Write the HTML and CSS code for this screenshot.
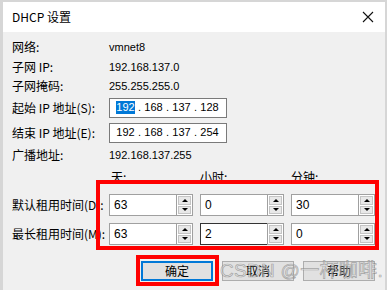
FILE: index.html
```html
<!DOCTYPE html>
<html lang="zh-CN">
  <head>
    <meta charset="UTF-8" />
    <title>DHCP 设置</title>
    <link rel="stylesheet" href="styles.css">
  </head>
  <body>
    <div class="screen">
      <div class="dialog">
        <div class="titlebar">
          <span>DHCP 设置</span>
          <svg class="close" width="12" height="12" viewBox="0 0 12 12" aria-hidden="true">
            <path d="M1 1 L11 11 M11 1 L1 11" stroke="#111" stroke-width="1.1" fill="none" />
          </svg>
        </div>

        <div class="body">
          <div class="row r1"><span class="label">网络:</span><span class="value">vmnet8</span></div>
          <div class="row r2"><span class="label">子网 IP:</span><span class="value">192.168.137.0</span></div>
          <div class="row r3"><span class="label">子网掩码:</span><span class="value">255.255.255.0</span></div>

          <div class="row ip">
            <span class="label">起始 IP 地址(S):</span>
            <div class="ipbox">
              <span class="oct sel">192</span><span class="dot">.</span>
              <span class="oct">168</span><span class="dot">.</span>
              <span class="oct">137</span><span class="dot">.</span>
              <span class="oct">128</span>
            </div>
          </div>
          <div class="row ip">
            <span class="label">结束 IP 地址(E):</span>
            <div class="ipbox">
              <span class="oct">192</span><span class="dot">.</span>
              <span class="oct">168</span><span class="dot">.</span>
              <span class="oct">137</span><span class="dot">.</span>
              <span class="oct">254</span>
            </div>
          </div>
          <div class="row r6"><span class="label">广播地址:</span><span class="value">192.168.137.255</span></div>

          <div class="units">
            <span>天:</span><span>小时:</span><span>分钟:</span>
          </div>

          <div class="row spinrow">
            <span class="label">默认租用时间(D):</span>
            <div class="spins">
              <div class="spin"><span class="num">63</span><span class="arrows"><i class="up"></i><i class="down"></i></span></div>
              <div class="spin"><span class="num">0</span><span class="arrows"><i class="up"></i><i class="down"></i></span></div>
              <div class="spin"><span class="num">30</span><span class="arrows"><i class="up"></i><i class="down"></i></span></div>
            </div>
          </div>
          <div class="row spinrow second">
            <span class="label">最长租用时间(M):</span>
            <div class="spins">
              <div class="spin"><span class="num">63</span><span class="arrows"><i class="up"></i><i class="down"></i></span></div>
              <div class="spin focus"><span class="num">2</span><span class="arrows"><i class="up"></i><i class="down"></i></span></div>
              <div class="spin"><span class="num">0</span><span class="arrows"><i class="up"></i><i class="down"></i></span></div>
            </div>
          </div>

          <div class="buttons">
            <button class="default">确定</button>
            <button>取消</button>
            <button>帮助</button>
          </div>
        </div>
      </div>

      <!-- annotations drawn over the screenshot -->
      <div class="mark mark-times"></div>
      <div class="mark mark-ok"></div>
      <div class="watermark">CSDN @一杯咖啡.</div>
    </div>
  </body>
</html>
```

FILE: styles.css
```css
* {
  margin: 0;
  padding: 0;
  box-sizing: border-box;
}
body {
  background: #d6d6d6;
  font: 12px/1 "Noto Sans CJK SC", "Liberation Sans", sans-serif;
  color: #000;
  overflow: hidden;
}
.screen {
  position: relative;
  width: 387px;
  height: 290px;
  overflow: hidden;
  padding: 2px 2px 0 3px;
}

/* Dialog window */
.dialog {
  width: 382px;
  height: 300px;
  background: #f0f0f0;
}
.titlebar {
  height: 30px;
  display: flex;
  align-items: center;
  justify-content: space-between;
  padding: 0 10px 0 9px;
  background: #fff;
  line-height: 16px;
}
.close {
  margin-right: 1px;
}
.body {
  padding: 5px 10px 0 9px;
}
.row {
  display: flex;
  align-items: center;
}
.label {
  width: 97px;
  flex: none;
  line-height: 16px;
  white-space: nowrap;
}
.value {
  font: 11px/16px "Liberation Sans", sans-serif;
}
.r1 { height: 20px; }
.r2 { height: 19px; }
.r3 { height: 19px; }
.ip { height: 25px; }
.r6 { height: 20px; }

/* IP address boxes */
.ipbox {
  width: 118px;
  height: 20px;
  display: flex;
  align-items: center;
  padding-left: 6px;
  background: #fff;
  border: 1px solid #7a7a7a;
  font: 11px/13px "Liberation Sans", sans-serif;
}
.oct {
  width: 19px;
  text-align: center;
}
.dot {
  width: 9px;
  text-align: center;
}
.sel {
  background: #0078d7;
  color: #fff;
}

/* Lease time */
.units {
  height: 29px;
  display: grid;
  grid-template-columns: 84px 84px 84px;
  column-gap: 7px;
  padding: 4px 0 0 97px;
  line-height: 16px;
}
.units span:first-child {
  padding-left: 2px;
}
.spinrow {
  height: 22px;
}
.spinrow.second {
  margin-top: 7px;
}
.spins {
  display: flex;
  gap: 7px;
}
.spin {
  width: 84px;
  height: 22px;
  display: flex;
}
.num {
  flex: 1;
  padding: 3px 0 0 4px;
  background: #fff;
  border: 1px solid #a0a0a0;
  border-right: none;
  font: 12px/15px "Liberation Sans", sans-serif;
}
.focus .num {
  border-color: #333;
}
.arrows {
  width: 17px;
  display: grid;
  grid-template-rows: 1fr 1fr;
  gap: 1px;
  padding: 1px;
  background: #fff;
  border: 1px solid #a0a0a0;
}
.arrows i {
  display: flex;
  align-items: center;
  justify-content: center;
  background: #e8e8e8;
  border: 1px solid #c4c4c4;
}
.arrows i::before {
  content: "";
  border-left: 3px solid transparent;
  border-right: 3px solid transparent;
}
.arrows .up::before {
  border-bottom: 3px solid #000;
}
.arrows .down::before {
  border-top: 3px solid #000;
}

/* Buttons */
.buttons {
  display: flex;
  justify-content: flex-end;
  gap: 9px;
  margin-top: 16px;
}
.buttons button {
  width: 72px;
  height: 20px;
  font: inherit;
  line-height: 16px;
  background: #e1e1e1;
  border: 1px solid #adadad;
}
.buttons .default {
  border: 2px solid #0078d7;
}

/* Annotations */
.mark {
  position: absolute;
  border: 4px solid #f00;
}
.mark-times {
  left: 96px;
  top: 180px;
  width: 283px;
  height: 70px;
}
.mark-ok {
  left: 136px;
  top: 255px;
  width: 83px;
  height: 31px;
}
.watermark {
  position: absolute;
  left: 220px;
  top: 259px;
  font: 19px/24px "Liberation Sans", "Noto Sans CJK SC", sans-serif;
  letter-spacing: 0.3px;
  color: rgba(230, 230, 230, 0.5);
  -webkit-text-stroke: 0.7px rgba(110, 110, 110, 0.55);
  white-space: nowrap;
}
```
